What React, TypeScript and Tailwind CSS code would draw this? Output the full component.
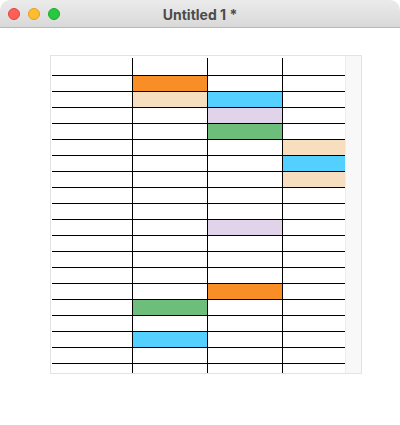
import React from "react";

const COLORS: Record<string, string> = {
  o: "bg-[#f98e27]",
  p: "bg-[#f7debf]",
  b: "bg-[#53d0ff]",
  l: "bg-[#e1d4ea]",
  g: "bg-[#6dbe7a]",
};

// rows: index -1 (partial top), 0..17 full, 18 partial bottom
const FILLS: Record<number, (string | null)[]> = {
  0: [null, "o", null, null],
  1: [null, "p", "b", null],
  2: [null, null, "l", null],
  3: [null, null, "g", null],
  4: [null, null, null, "p"],
  5: [null, null, null, "b"],
  6: [null, null, null, "p"],
  9: [null, null, "l", null],
  13: [null, null, "o", null],
  14: [null, "g", null, null],
  16: [null, "b", null, null],
};

export default function App() {
  const rows: number[] = [];
  for (let i = -1; i <= 18; i++) rows.push(i);
  return (
    <div className="w-[400px] h-[425px] bg-white overflow-hidden">
      <div className="h-[28px] rounded-t-[10px] bg-gradient-to-b from-[#ebebeb] to-[#d9d9d9] border-b border-[#b9b9b9] flex items-center relative">
        <div className="flex items-center gap-[8px] pl-[8px]">
          <div className="w-[12px] h-[12px] rounded-full bg-[#fe5f57] border border-[#e0443e]" />
          <div className="w-[12px] h-[12px] rounded-full bg-[#febc2e] border border-[#dea123]" />
          <div className="w-[12px] h-[12px] rounded-full bg-[#28c840] border border-[#1aab29]" />
        </div>
        <div
          className="absolute inset-0 flex items-center justify-center text-[14px] font-bold text-[#4b4b4b] pt-px"
          style={{ fontFamily: "Inter, 'Noto Sans', sans-serif" }}
        >
          Untitled 1 *
        </div>
      </div>
      <div className="pl-[50px] pt-[27px]">
        <div className="w-[312px] h-[319px] border border-[#e3e3e3] flex">
          <div className="pl-px pt-[2px] w-[294px]">
            <div className="grid grid-cols-[81px_75px_75px_62px]">
              {rows.map((r) => {
                const h =
                  r === -1 ? "h-[18px]" : r === 18 ? "h-[9px]" : "h-[16px]";
                const fills = FILLS[r] || [null, null, null, null];
                return [0, 1, 2, 3].map((c) => (
                  <div
                    key={`${r}-${c}`}
                    className={`${h} ${r !== 18 ? "border-b border-black" : ""} ${
                      c < 3 ? "border-r border-black" : ""
                    } ${fills[c] ? COLORS[fills[c] as string] : "bg-white"}`}
                  />
                ));
              })}
            </div>
          </div>
          <div className="w-[16px] h-full bg-[#f8f8f8] border-l border-[#ededed]" />
        </div>
      </div>
    </div>
  );
}
